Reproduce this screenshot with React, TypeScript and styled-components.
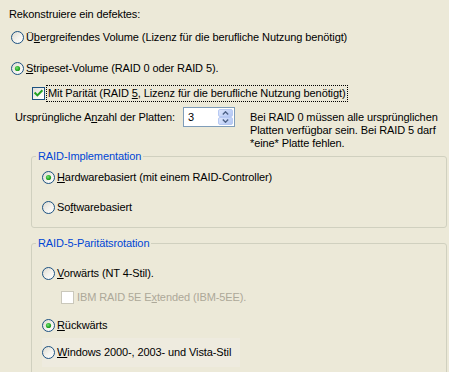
import React from "react";
import styled, { createGlobalStyle } from "styled-components";

const GlobalStyle = createGlobalStyle`
  html, body {
    margin: 0;
    padding: 0;
    background: #ECE9D8;
  }
  body {
    font-family: "Liberation Sans", Arial, sans-serif;
    font-size: 11px;
    letter-spacing: -0.1px;
    color: #000;
  }
`;

const Page = styled.div`
  width: 449px;
  height: 372px;
  overflow: hidden;
  background: #ECE9D8;
  display: flex;
  flex-direction: column;
`;

const Row = styled.div<{ $top: number; $indent: number; $h?: number }>`
  display: flex;
  align-items: center;
  height: ${(p) => p.$h ?? 20}px;
  margin-top: ${(p) => p.$top}px;
  padding-left: ${(p) => p.$indent}px;
  flex-shrink: 0;
  white-space: nowrap;
`;

const TintRow = styled(Row)`
  width: 198px;
  background: #EEEBDF;
`;

const Text = styled.span<{ $disabled?: boolean }>`
  line-height: 15px;
  color: ${(p) => (p.$disabled ? "#ACA899" : "#000")};
`;

const RadioLabel = styled(Text)`
  margin-left: 2px;
`;

const CheckLabel = styled(Text)<{ $focus?: boolean }>`
  margin-left: 1px;
  padding: 0 1px;
  border: 1px dotted ${(p) => (p.$focus ? "#000" : "transparent")};
`;

const SpinRow = styled.div`
  display: flex;
  align-items: flex-start;
  margin-top: 4px;
  padding-left: 15px;
  flex-shrink: 0;
`;

const SpinLabel = styled.span`
  width: 168px;
  line-height: 20px;
  white-space: nowrap;
`;

const SpinBox = styled.div`
  box-sizing: border-box;
  width: 52px;
  height: 20px;
  border: 1px solid #7F9DB9;
  background: #fff;
  display: flex;
  align-items: stretch;
  justify-content: space-between;
  padding: 1px 1px 1px 4px;
`;

const SpinValue = styled.span`
  line-height: 16px;
`;

const SpinButtons = styled.div`
  width: 15px;
  display: flex;
  flex-direction: column;
  gap: 0;
`;

const SpinButton = styled.div`
  flex: 1;
  box-sizing: border-box;
  border: 1px solid #B7C9F3;
  border-radius: 2px;
  background: linear-gradient(135deg, #DDE6FC 0%, #C3D3F8 60%, #B4C7F2 100%);
  display: flex;
  align-items: center;
  justify-content: center;
`;

const Note = styled.div`
  margin-left: 15px;
  margin-top: 4px;
  line-height: 13px;
`;

const Group = styled.div<{ $top: number; $bottom: number }>`
  box-sizing: border-box;
  margin-left: 31px;
  margin-top: ${(p) => p.$top}px;
  width: 416px;
  border: 1px solid #D0D0BF;
  border-radius: 3px;
  padding: 0 0 ${(p) => p.$bottom}px 10px;
  flex-shrink: 0;
  display: flex;
  flex-direction: column;
`;

const Legend = styled.div`
  align-self: flex-start;
  margin: -7px 0 0 -6px;
  padding: 0 2px;
  line-height: 13px;
  background: #ECE9D8;
  color: #0046D5;
  white-space: nowrap;
`;

const Key = styled.span`
  text-decoration: underline;
  text-underline-offset: 1px;
`;

const Radio: React.FC<{ checked?: boolean }> = ({ checked }) => (
  <svg width="13" height="13" viewBox="0 0 13 13" style={{ flexShrink: 0 }}>
    <defs>
      <linearGradient id="rfill" x1="0" y1="0" x2="1" y2="1">
        <stop offset="0" stopColor="#DCD9CE" />
        <stop offset="0.55" stopColor="#F4F3EE" />
        <stop offset="1" stopColor="#FFFFFF" />
      </linearGradient>
      <radialGradient id="rdot" cx="0.4" cy="0.4" r="0.6">
        <stop offset="0" stopColor="#7BE07B" />
        <stop offset="0.6" stopColor="#31B531" />
        <stop offset="1" stopColor="#1E951E" />
      </radialGradient>
    </defs>
    <circle cx="6.5" cy="6.5" r="6" fill="url(#rfill)" stroke="#1C5180" strokeWidth="1" />
    {checked && <circle cx="6.5" cy="6.5" r="2.6" fill="url(#rdot)" />}
  </svg>
);

const Check: React.FC<{ checked?: boolean; disabled?: boolean }> = ({ checked, disabled }) => (
  <svg width="13" height="13" viewBox="0 0 13 13" style={{ flexShrink: 0 }}>
    <defs>
      <linearGradient id="cfill" x1="0" y1="0" x2="1" y2="1">
        <stop offset="0" stopColor="#DCDBD5" />
        <stop offset="0.6" stopColor="#F6F6F3" />
        <stop offset="1" stopColor="#FFFFFF" />
      </linearGradient>
    </defs>
    <rect
      x="0.5"
      y="0.5"
      width="12"
      height="12"
      fill={disabled ? "#FFFFFF" : "url(#cfill)"}
      stroke={disabled ? "#CAC8BB" : "#1C5180"}
    />
    {checked && (
      <polyline
        points="3.3,6.2 5.4,8.4 9.7,4"
        fill="none"
        stroke="#21A121"
        strokeWidth="2"
        strokeLinecap="square"
      />
    )}
  </svg>
);

const Arrow: React.FC<{ up?: boolean }> = ({ up }) => (
  <svg width="7" height="4" viewBox="0 0 7 4">
    <polyline
      points={up ? "0.8,3.4 3.5,0.8 6.2,3.4" : "0.8,0.6 3.5,3.2 6.2,0.6"}
      fill="none"
      stroke="#4D6185"
      strokeWidth="1.4"
    />
  </svg>
);

export default function App() {
  return (
    <>
      <GlobalStyle />
      <Page>
        <Row $top={4} $indent={9}>
          <Text>Rekonstruiere ein defektes:</Text>
        </Row>
        <Row $top={3} $indent={11}>
          <Radio />
          <RadioLabel>
            Ü<Key>b</Key>ergreifendes Volume (Lizenz für die berufliche Nutzung benötigt)
          </RadioLabel>
        </Row>
        <Row $top={11} $indent={11}>
          <Radio checked />
          <RadioLabel>
            <Key>S</Key>tripeset-Volume (RAID 0 oder RAID 5).
          </RadioLabel>
        </Row>
        <Row $top={5} $indent={32}>
          <Check checked />
          <CheckLabel $focus>
            Mit Parität (RAID <Key>5</Key>, Lizenz für die berufliche Nutzung benötigt)
          </CheckLabel>
        </Row>
        <SpinRow>
          <SpinLabel>
            Ursprüngliche A<Key>n</Key>zahl der Platten:
          </SpinLabel>
          <SpinBox>
            <SpinValue>3</SpinValue>
            <SpinButtons>
              <SpinButton>
                <Arrow up />
              </SpinButton>
              <SpinButton>
                <Arrow />
              </SpinButton>
            </SpinButtons>
          </SpinBox>
          <Note>
            Bei RAID 0 müssen alle ursprünglichen
            <br />
            Platten verfügbar sein. Bei RAID 5 darf
            <br />
            *eine* Platte fehlen.
          </Note>
        </SpinRow>

        <Group $top={6} $bottom={10}>
          <Legend>RAID-Implementation</Legend>
          <Row $top={4} $indent={0}>
            <Radio checked />
            <RadioLabel>
              <Key>H</Key>ardwarebasiert (mit einem RAID-Controller)
            </RadioLabel>
          </Row>
          <Row $top={10} $indent={0}>
            <Radio />
            <RadioLabel>
              So<Key>f</Key>twarebasiert
            </RadioLabel>
          </Row>
        </Group>

        <Group $top={15} $bottom={20}>
          <Legend>RAID-5-Paritätsrotation</Legend>
          <Row $top={13} $indent={0}>
            <Radio />
            <RadioLabel>
              <Key>V</Key>orwärts (NT 4-Stil).
            </RadioLabel>
          </Row>
          <Row $top={4} $indent={19}>
            <Check disabled />
            <CheckLabel $disabled>
              IBM RAID 5E E<Key>x</Key>tended (IBM-5EE).
            </CheckLabel>
          </Row>
          <Row $top={8} $indent={0}>
            <Radio checked />
            <RadioLabel>
              <Key>R</Key>ückwärts
            </RadioLabel>
          </Row>
          <TintRow $top={3} $indent={0} $h={29}>
            <Radio />
            <RadioLabel>
              <Key>W</Key>indows 2000-, 2003- und Vista-Stil
            </RadioLabel>
          </TintRow>
        </Group>
      </Page>
    </>
  );
}
